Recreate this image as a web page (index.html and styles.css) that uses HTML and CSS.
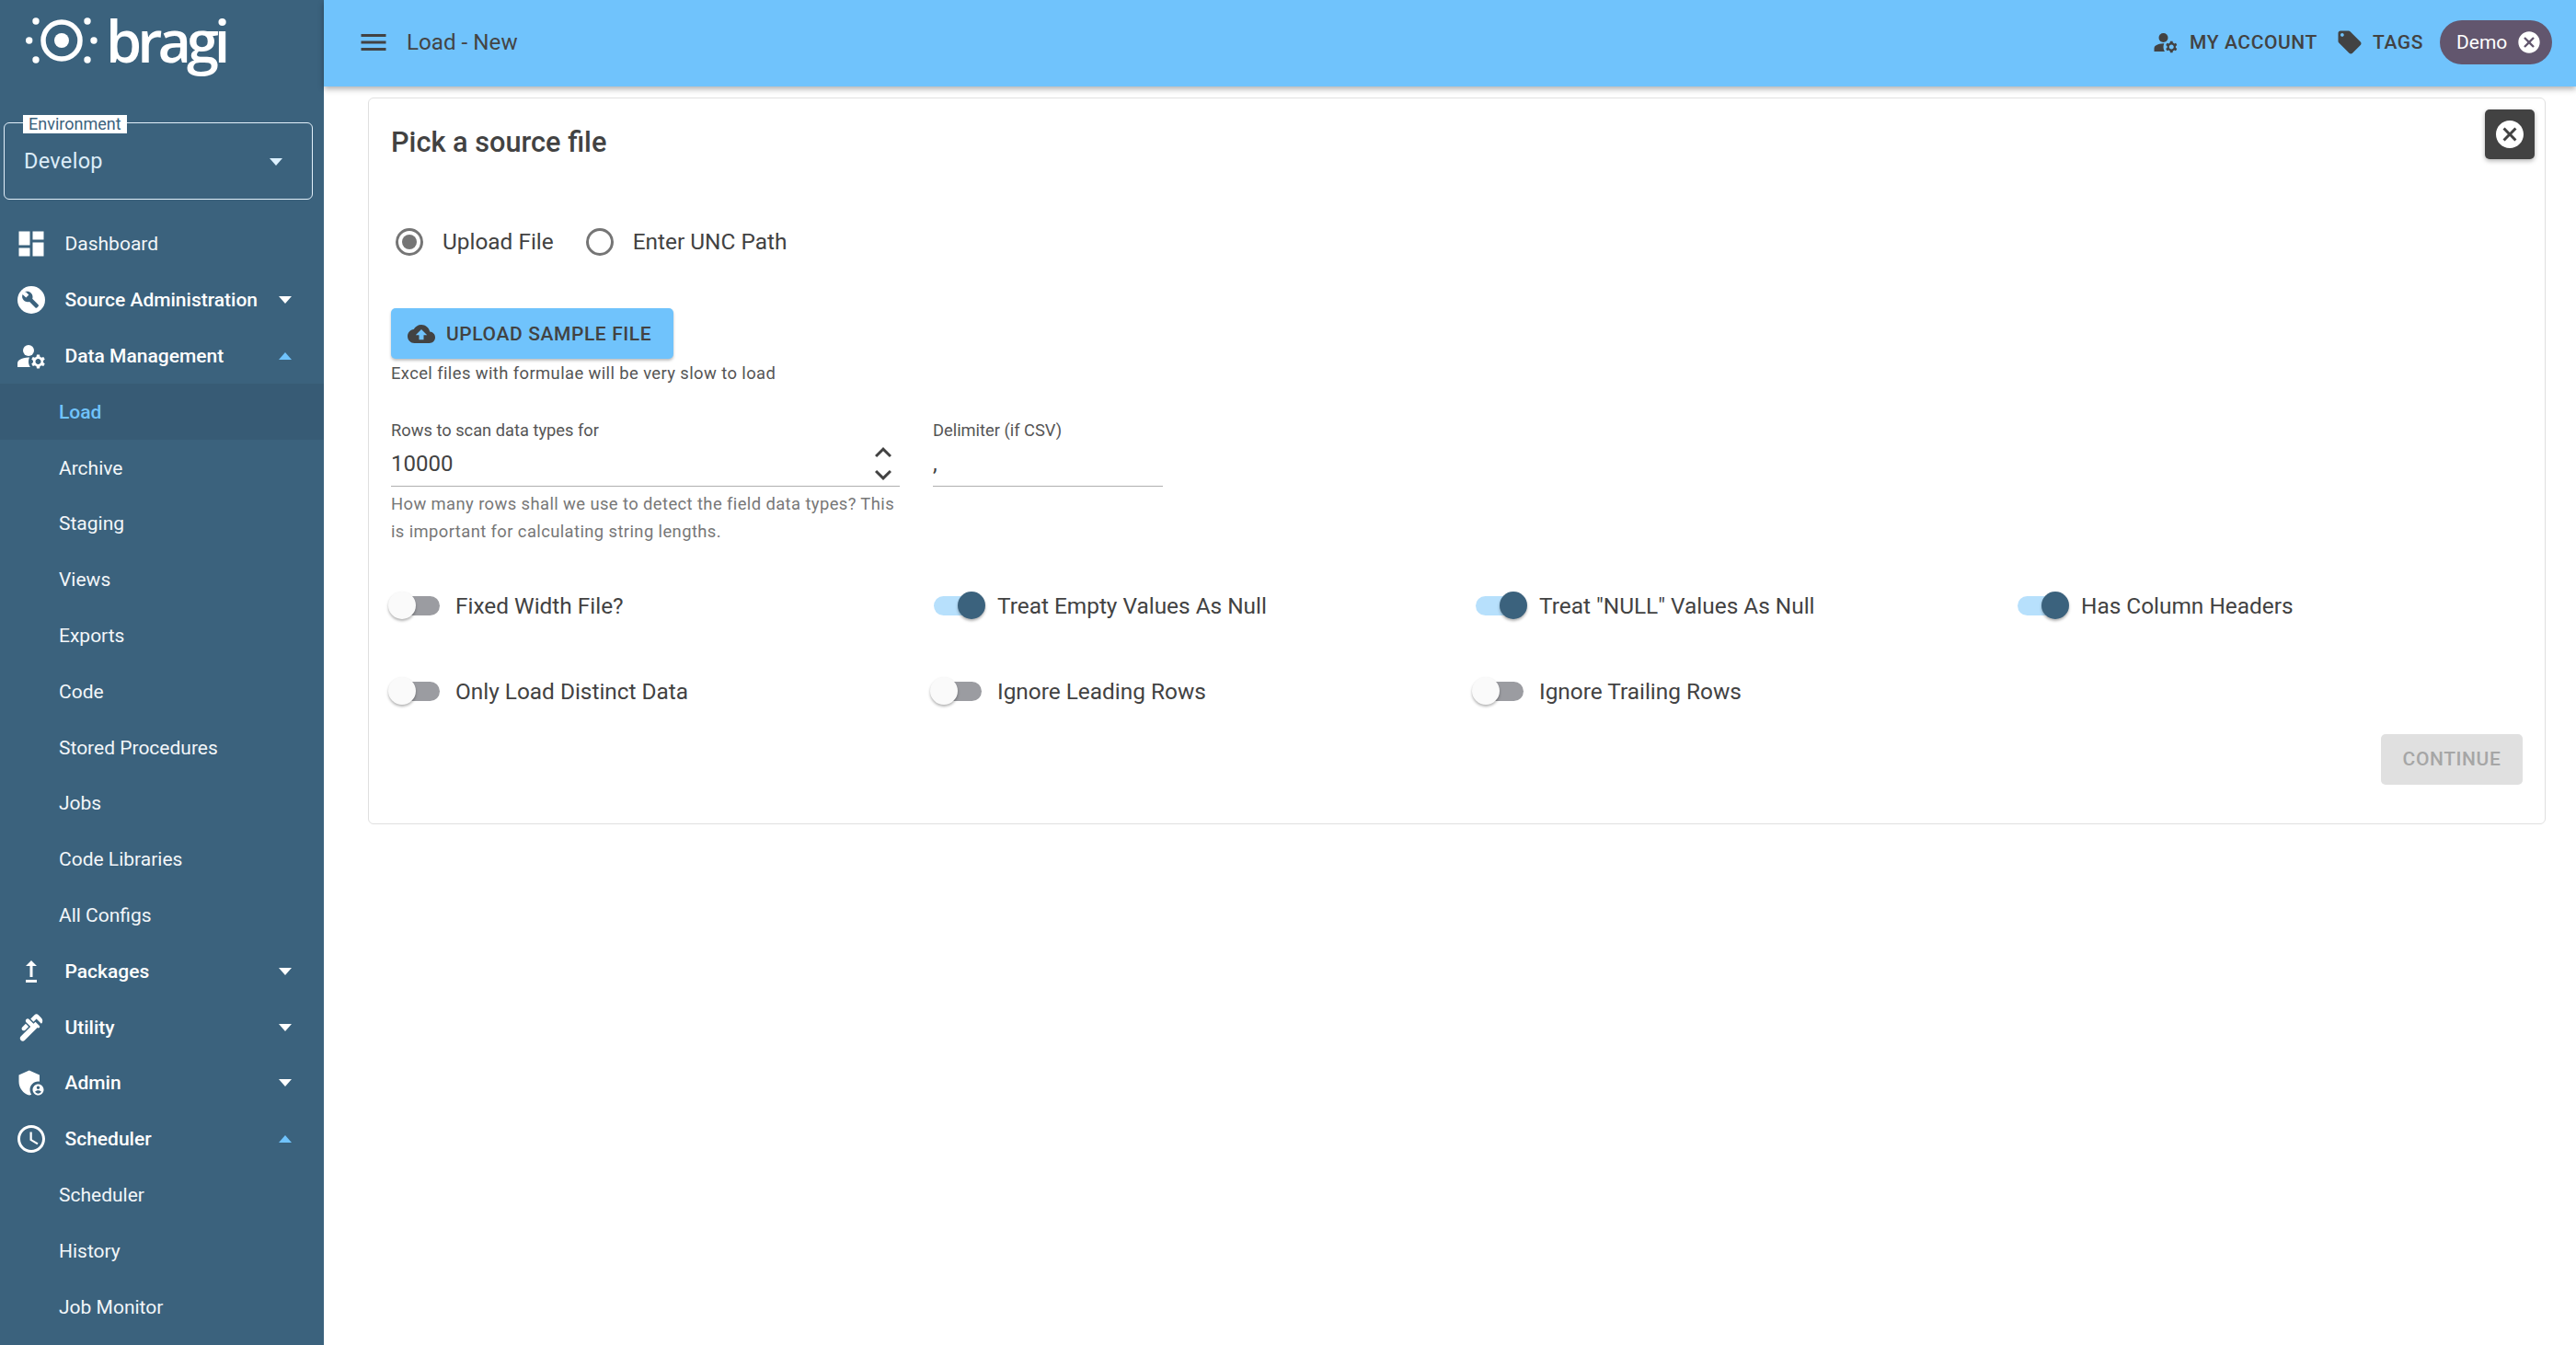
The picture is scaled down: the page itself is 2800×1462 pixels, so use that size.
FILE: index.html
```html
<!DOCTYPE html>
<html lang="en">
<head>
<meta charset="utf-8">
<title>Load - New</title>
<link rel="stylesheet" href="styles.css">
</head>
<body>
<svg class="defs" width="0" height="0" aria-hidden="true">
  <defs>
    <symbol id="i-cancel" viewBox="0 0 24 24"><path d="M12 2C6.47 2 2 6.47 2 12s4.47 10 10 10 10-4.47 10-10S17.53 2 12 2zm5 13.59L15.59 17 12 13.41 8.41 17 7 15.59 10.59 12 7 8.41 8.41 7 12 10.59 15.59 7 17 8.41 13.41 12 17 15.59z"/></symbol>
    <symbol id="i-manage" viewBox="0 0 24 24"><circle cx="10" cy="8" r="4"/><path d="M10.67 13.02C10.45 13.01 10.23 13 10 13c-2.42 0-4.68.67-6.61 1.82C2.51 15.34 2 16.32 2 17.35V20h9.26C10.47 18.87 10 17.49 10 16c0-1.07.25-2.07.67-2.98z"/><path fill-rule="evenodd" d="M20.75 16c0-.22-.03-.42-.06-.63l1.14-1.01-1-1.73-1.45.49c-.32-.27-.68-.48-1.08-.63L18 11h-2l-.3 1.49c-.4.15-.76.36-1.08.63l-1.45-.49-1 1.73 1.14 1.01c-.03.21-.06.41-.06.63s.03.42.06.63l-1.14 1.01 1 1.73 1.45-.49c.32.27.68.48 1.08.63L16 21h2l.3-1.49c.4-.15.76-.36 1.08-.63l1.45.49 1-1.73-1.14-1.01c.03-.21.06-.41.06-.63zM17 18c-1.1 0-2-.9-2-2s.9-2 2-2 2 .9 2 2-.9 2-2 2z"/></symbol>
  </defs>
</svg>
<div class="app">
  <aside class="sidebar">
    <div class="logo">
      <svg class="logo-mark" viewBox="0 0 80 80" aria-hidden="true">
        <circle class="logo-ring" cx="39" cy="44" r="20"/>
        <circle cx="39" cy="44" r="8"/>
        <circle cx="11" cy="23" r="3.7"/><circle cx="67" cy="23" r="3.7"/>
        <circle cx="3.7" cy="44" r="3.7"/><circle cx="74" cy="44" r="3.7"/>
        <circle cx="11" cy="65" r="3.7"/><circle cx="67" cy="65" r="3.7"/>
      </svg>
      <span class="logo-text">bragi</span>
    </div>
    <div class="env">
      <span class="env-label">Environment</span>
      <span class="env-value">Develop</span>
      <span class="caret caret-env"></span>
    </div>
    <nav class="nav">
      <a class="row row-plain"><svg class="nav-icon" viewBox="0 0 24 24"><path d="M3 13h8V3H3v10zm0 8h8v-6H3v6zm10 0h8V11h-8v10zm0-18v6h8V3h-8z"/></svg><span>Dashboard</span></a>
      <a class="row row-group"><svg class="nav-icon" viewBox="0 0 24 24"><circle cx="12" cy="12" r="10"/><path class="cut" d="M8.1 5.6l2.5 2.5-2 2-2.5-2.4c-.6 1.5-.3 3.2.9 4.4 1.1 1.1 2.7 1.4 4.1.9l4.3 4.3c.3.3.8.3 1.1 0l1-1c.3-.3.3-.8 0-1.1l-4.3-4.3c.5-1.4.2-3-.9-4.1-1.2-1.2-2.9-1.5-4.4-.9z" transform="translate(-.4 .3)"/></svg><span>Source Administration</span><i class="caret"></i></a>
      <a class="row row-group"><svg class="nav-icon" viewBox="0 0 24 24"><use href="#i-manage"/></svg><span>Data Management</span><i class="caret caret-up"></i></a>
      <a class="row row-sub row-active">Load</a>
      <a class="row row-sub">Archive</a>
      <a class="row row-sub">Staging</a>
      <a class="row row-sub">Views</a>
      <a class="row row-sub">Exports</a>
      <a class="row row-sub">Code</a>
      <a class="row row-sub">Stored Procedures</a>
      <a class="row row-sub">Jobs</a>
      <a class="row row-sub">Code Libraries</a>
      <a class="row row-sub">All Configs</a>
      <a class="row row-group"><svg class="nav-icon" viewBox="0 0 24 24"><path d="M16 18v2H8v-2h8zM11 7.99V16h2V7.99h3L12 4 8 7.99h3z"/></svg><span>Packages</span><i class="caret"></i></a>
      <a class="row row-group"><svg class="nav-icon" viewBox="0 0 24 24"><path d="M19.28 4.93l-2.12-2.12c-.78-.78-2.05-.78-2.83 0L11.5 5.64l2.12 2.12 2.12-2.12 3.54 3.54c1.17-1.18 1.17-3.08 0-4.25zM5.49 13.77c.59.59 1.54.59 2.12 0l2.47-2.47-2.12-2.13-2.47 2.47c-.59.59-.59 1.54 0 2.13zM15.04 7.76l-.71.71-.71.71-3.18-3.18c-.59-.6-1.54-.6-2.12-.01-.59.59-.59 1.54 0 2.12l3.18 3.18-.71.71-6.36 6.36c-.78.78-.78 2.05 0 2.83.78.78 2.05.78 2.83 0L16.45 12c.39.39 1.02.39 1.41 0 .39-.39.39-1.02 0-1.41l-2.82-2.83z"/></svg><span>Utility</span><i class="caret"></i></a>
      <a class="row row-group"><svg class="nav-icon" viewBox="0 0 24 24"><path d="M17 11c.34 0 .67.04 1 .09V6.27L10.5 3 3 6.27v4.91c0 4.54 3.2 8.79 7.5 9.82.55-.13 1.08-.32 1.6-.55C11.41 19.47 11 18.28 11 17c0-3.31 2.69-6 6-6z"/><path fill-rule="evenodd" d="M17 13c-2.21 0-4 1.79-4 4s1.79 4 4 4 4-1.79 4-4-1.79-4-4-4zm0 1.38c.62 0 1.12.51 1.12 1.12s-.51 1.12-1.12 1.12-1.12-.51-1.12-1.12.5-1.12 1.12-1.12zm0 5.37c-.93 0-1.74-.46-2.24-1.17.05-.72 1.51-1.08 2.24-1.08s2.19.36 2.24 1.08c-.5.71-1.31 1.17-2.24 1.17z"/></svg><span>Admin</span><i class="caret"></i></a>
      <a class="row row-group"><svg class="nav-icon" viewBox="0 0 24 24"><path d="M11.99 2C6.47 2 2 6.48 2 12s4.47 10 9.99 10C17.52 22 22 17.52 22 12S17.52 2 11.99 2zM12 20c-4.42 0-8-3.58-8-8s3.58-8 8-8 8 3.58 8 8-3.58 8-8 8zm.5-13H11v6l5.25 3.15.75-1.23-4.5-2.67z"/></svg><span>Scheduler</span><i class="caret caret-up"></i></a>
      <a class="row row-sub">Scheduler</a>
      <a class="row row-sub">History</a>
      <a class="row row-sub">Job Monitor</a>
    </nav>
  </aside>
  <div class="main">
    <header class="topbar">
      <svg class="menu-icon" viewBox="0 0 24 24"><path d="M3 18h18v-2H3v2zm0-5h18v-2H3v2zm0-7v2h18V6H3z"/></svg>
      <span class="page-title">Load - New</span>
      <div class="topbar-right">
        <a class="top-link"><svg class="top-icon" viewBox="0 0 24 24"><use href="#i-manage"/></svg>MY ACCOUNT</a>
        <a class="top-link"><svg class="top-icon tag-icon" viewBox="0 0 24 24"><path d="M21.41 11.58l-9-9C12.05 2.22 11.55 2 11 2H4c-1.1 0-2 .9-2 2v7c0 .55.22 1.05.59 1.42l9 9c.36.36.86.58 1.41.58.55 0 1.05-.22 1.41-.59l7-7c.37-.36.59-.86.59-1.41 0-.55-.23-1.06-.59-1.42zM5.5 7C4.67 7 4 6.33 4 5.5S4.67 4 5.5 4 7 4.67 7 5.5 6.33 7 5.5 7z"/></svg>TAGS</a>
        <span class="chip">Demo<svg class="chip-x" viewBox="0 0 24 24"><use href="#i-cancel"/></svg></span>
      </div>
    </header>
    <div class="content">
      <section class="card">
        <button class="close-btn" type="button" aria-label="Close"><svg viewBox="0 0 24 24"><use href="#i-cancel"/></svg></button>
        <h2 class="card-title">Pick a source file</h2>
        <div class="radios">
          <label class="radio"><span class="radio-dot radio-on"></span>Upload File</label>
          <label class="radio"><span class="radio-dot"></span>Enter UNC Path</label>
        </div>
        <button class="upload" type="button"><svg viewBox="0 0 24 24"><path d="M19.35 10.04C18.67 6.59 15.64 4 12 4 9.11 4 6.6 5.64 5.35 8.04 2.34 8.36 0 10.91 0 14c0 3.31 2.69 6 6 6h13c2.76 0 5-2.24 5-5 0-2.64-2.05-4.78-4.65-4.96zM14 13v4h-4v-4H7l5-5 5 5h-3z"/></svg>UPLOAD SAMPLE FILE</button>
        <p class="hint">Excel files with formulae will be very slow to load</p>
        <div class="fields">
          <div class="field field-rows">
            <div class="field-label">Rows to scan data types for</div>
            <div class="field-input"><span class="input-value">10000</span>
              <span class="spin">
                <svg viewBox="0 4 24 16"><path d="M7.41 15.41L12 10.83l4.59 4.58L18 14l-6-6-6 6z"/></svg>
                <svg viewBox="0 4 24 16"><path d="M7.41 8.59L12 13.17l4.59-4.58L18 10l-6 6-6-6z"/></svg>
              </span>
            </div>
            <p class="help">How many rows shall we use to detect the field data types? This is important for calculating string lengths.</p>
          </div>
          <div class="field field-delim">
            <div class="field-label">Delimiter (if CSV)</div>
            <div class="field-input"><span class="delim-value">,</span></div>
          </div>
        </div>
        <div class="toggles">
          <div class="toggle"><span class="switch"><i></i></span>Fixed Width File?</div>
          <div class="toggle"><span class="switch switch-on"><i></i></span>Treat Empty Values As Null</div>
          <div class="toggle"><span class="switch switch-on"><i></i></span>Treat "NULL" Values As Null</div>
          <div class="toggle"><span class="switch switch-on"><i></i></span>Has Column Headers</div>
          <div class="toggle"><span class="switch"><i></i></span>Only Load Distinct Data</div>
          <div class="toggle"><span class="switch"><i></i></span>Ignore Leading Rows</div>
          <div class="toggle"><span class="switch"><i></i></span>Ignore Trailing Rows</div>
        </div>
        <div class="actions"><button class="continue" type="button" disabled>CONTINUE</button></div>
      </section>
    </div>
  </div>
</div>
</body>
</html>
```

FILE: styles.css
```css
* { box-sizing: border-box; }
html, body { margin: 0; height: 100%; background: #fff; overflow: hidden; }
body { font-family: Roboto, "Liberation Sans", sans-serif; color: #424242; }
.defs { position: absolute; }
.app { display: flex; height: 1462px; }

.sidebar { width: 352px; flex: none; background: #3b627d; color: #fff; overflow: hidden; }
.logo { height: 124px; display: flex; align-items: flex-start; padding-left: 28px; }
.logo-mark { width: 80px; height: 80px; fill: #fff; flex: none; }
.logo-ring { fill: none; stroke: #fff; stroke-width: 5.5; }
.logo-text { font-family: "Open Sans", sans-serif; font-weight: 600; font-size: 63px; line-height: 80px; letter-spacing: -5px; margin-left: 7px; margin-top: 4px; }

.env { position: relative; margin: 9px 12px 0 4px; height: 84px; border: 1px solid #e3f0fa; border-radius: 6px; display: flex; align-items: center; padding-left: 21px; }
.env-label { position: absolute; left: 20px; top: -9px; background: #fff; color: #3b627d; font-size: 18px; line-height: 20px; padding: 0 6px; }
.env-value { font-size: 23.5px; color: #dcecf8; letter-spacing: .3px; }
.caret { display: block; width: 0; height: 0; border-left: 7.5px solid transparent; border-right: 7.5px solid transparent; border-top: 8px solid #fff; }
.caret-env { position: absolute; left: 288px; top: 38px; border-top-color: #dcf0ff; }
.caret-up { border-top: 0; border-bottom: 8px solid #70c3fc; }

.nav { margin-top: 18px; display: flex; flex-direction: column; }
.row { height: 60.8px; flex: none; display: flex; align-items: center; color: #fff; font-size: 21px; }
.row-plain, .row-group { padding-left: 16px; }
.row-plain { color: #f2f6f9; }
.row-group { font-weight: 500; }
.row-group .caret { margin-left: auto; margin-right: 35px; }
.row-sub { padding-left: 64px; color: #f2f6f9; }
.row-active { background: #375b75; color: #70c3fc; font-weight: 500; }
.nav-icon { width: 36px; height: 36px; fill: #fff; flex: none; margin-right: 18.5px; }
.nav-icon .cut { fill: #3b627d; }

.main { flex: 1; min-width: 0; display: flex; flex-direction: column; }
.topbar { height: 94px; flex: none; background: #70c3fc; display: flex; align-items: center; padding-left: 36px; padding-right: 26px; box-shadow: 0 3px 6px rgba(0,0,0,.3); position: relative; }
.menu-icon { width: 36px; height: 36px; fill: #424242; flex: none; margin-top: -3px; }
.page-title { font-size: 24.2px; margin-left: 18px; margin-top: -3px; color: #444; }
.topbar-right { margin-left: auto; display: flex; align-items: center; margin-top: -2px; }
.top-link { display: flex; align-items: center; font-size: 21px; font-weight: 500; letter-spacing: .6px; color: #424242; }
.top-icon { width: 30px; height: 30px; fill: #424242; margin-right: 11px; }
.tag-icon { margin-left: 20px; margin-right: 10px; }
.chip { margin-left: 18px; height: 48px; width: 122px; border-radius: 24px; background: #62566e; color: #fff; display: flex; align-items: center; padding-left: 18px; font-size: 21px; }
.chip-x { width: 28px; height: 28px; fill: #fff; margin-left: 10px; }

.content { padding: 12px 33px 0 48px; }
.card { position: relative; border: 1px solid #e0e0e0; border-radius: 6px; padding: 23px 24px 42px; background: #fff; }
.close-btn { position: absolute; right: 11px; top: 12px; width: 54px; height: 54px; padding: 9px; border: 0; border-radius: 5px; background: #424242; box-shadow: 0 2px 5px rgba(0,0,0,.3); }
.close-btn svg { display: block; width: 36px; height: 36px; fill: #fff; }
.card-title { margin: 0; font-size: 30.7px; font-weight: 500; line-height: 50px; color: #424242; }

.radios { display: flex; margin-top: 68px; padding-left: 5px; }
.radio { display: flex; align-items: center; font-size: 24.4px; line-height: 30px; margin-right: 35px; color: #424242; }
.radio-dot { width: 30px; height: 30px; border: 3px solid #757575; border-radius: 50%; margin-right: 21px; display: flex; align-items: center; justify-content: center; }
.radio-on::after { content: ""; width: 16px; height: 16px; border-radius: 50%; background: #757575; }

.upload { display: flex; align-items: center; margin-top: 57px; width: 307px; height: 55px; padding: 0 0 0 18px; border: 0; border-radius: 5px; background: #70c3fc; color: #424242; font-family: inherit; font-size: 21px; font-weight: 500; letter-spacing: .6px; box-shadow: 0 2px 3px rgba(0,0,0,.25); }
.upload svg { width: 30px; height: 30px; fill: #424242; margin-right: 12px; }
.hint { margin: 4px 0 0; font-size: 18.4px; line-height: 24px; letter-spacing: .4px; color: #555; }

.fields { display: flex; margin-top: 38px; }
.field-rows { width: 553px; margin-right: 36px; }
.field-delim { width: 250px; }
.field-label { font-size: 18.3px; line-height: 24px; color: #555; }
.field-input { height: 49px; border-bottom: 1px solid #b0b0b0; display: flex; align-items: center; justify-content: space-between; }
.input-value { font-size: 24px; color: #424242; }
.delim-value { font-size: 24px; color: #424242; }
.spin { display: flex; flex-direction: column; }
.spin svg { display: block; width: 36px; height: 24px; fill: #424242; }
.help { margin: 4px 0 0; font-size: 18.4px; line-height: 30px; letter-spacing: .4px; color: #777; }

.toggles { display: grid; grid-template-columns: repeat(4, 589px); row-gap: 63px; margin-top: 50px; }
.toggle { display: flex; align-items: center; height: 30px; font-size: 24.4px; color: #424242; }
.switch { position: relative; width: 70px; height: 30px; flex: none; }
.switch::before { content: ""; position: absolute; left: 3px; top: 4.5px; width: 50px; height: 21px; border-radius: 10.5px; background: #9b9ca1; }
.switch i { position: absolute; left: -3px; top: 0; width: 30px; height: 30px; border-radius: 50%; background: #fafafa; box-shadow: 0 2px 3px rgba(0,0,0,.3); }
.switch-on::before { left: 1px; background: #b7e0fc; }
.switch-on i { left: 27px; background: #3b627d; }

.actions { display: flex; justify-content: flex-end; margin-top: 31.5px; }
.continue { width: 154px; height: 55px; border: 0; border-radius: 5px; background: #e0e0e0; color: #a6a6a6; font-family: inherit; font-size: 21px; font-weight: 500; letter-spacing: .6px; padding: 0; }
```
